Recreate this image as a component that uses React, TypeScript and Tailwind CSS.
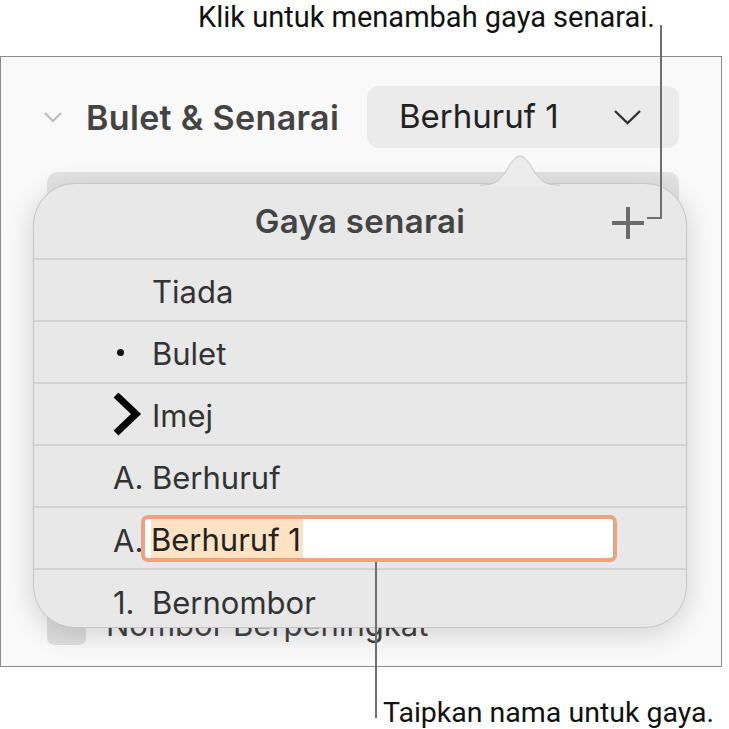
const rows = [
  { marker: "", label: "Tiada" },
  { marker: "dot", label: "Bulet" },
  { marker: "chev", label: "Imej" },
  { marker: "A.", label: "Berhuruf" },
  { marker: "A.", label: "Berhuruf 1", editing: true },
  { marker: "1.", label: "Bernombor" },
];

function Marker({ kind }: { kind: string }) {
  if (kind === "dot") {
    return <span className="ml-[4px] -mt-[4px] block h-[7px] w-[7px] rounded-full bg-[#111]" />;
  }
  if (kind === "chev") {
    return (
      <svg width="30" height="44" viewBox="0 0 30 44" className="-mt-[6px]">
        <polyline points="3,3 23,22 3,41" fill="none" stroke="#000" strokeWidth="7" strokeLinejoin="miter" />
      </svg>
    );
  }
  return <span className="text-[31px] text-[#333]">{kind}</span>;
}

function App() {
  return (
    <div className="relative h-[729px] w-[729px] overflow-hidden bg-white font-['Inter',sans-serif]">
      {/* top callout */}
      <div className="h-[56px] pr-[74px] text-right font-['Roboto',sans-serif] text-[29px] leading-[34px] text-[#111]">
        Klik untuk menambah gaya senarai.
      </div>

      {/* inspector panel */}
      <div className="h-[611px] w-[722px] border border-[#8c8c8c] bg-[#f9f9f9] px-[42px] pt-[29px]">
        <div className="flex items-center">
          <svg width="20" height="12" viewBox="0 0 20 12">
            <polyline points="2,2 10,10 18,2" fill="none" stroke="#bdbdbd" strokeWidth="2.2" />
          </svg>
          <span className="ml-[23px] text-[34px] font-semibold tracking-[0.01em] text-[#444]">Bulet &amp; Senarai</span>
          <div className="ml-auto flex h-[62px] w-[312px] items-center justify-between rounded-[12px] bg-[#ebebeb] pl-[32px] pr-[37px]">
            <span className="text-[33px] text-[#222]">Berhuruf 1</span>
            <svg width="29" height="16" viewBox="0 0 29 16">
              <polyline points="2,2 14.5,14 27,2" fill="none" stroke="#333" strokeWidth="2.4" />
            </svg>
          </div>
        </div>
        <div className="ml-[4px] mt-[24px] h-[46px] rounded-[10px] bg-[#e3e3e3]" />
        <div className="ml-[4px] mt-[384px] flex items-center">
          <div className="h-[40px] w-[39px] rounded-[7px] bg-[#dedede]" />
          <span className="ml-[20px] text-[31px] text-[#444]">Nombor Berpeningkat</span>
        </div>
      </div>

      {/* popover */}
      <div className="absolute left-[33px] top-[183px] h-[445px] w-[654px] rounded-[42px] border border-[#c6c6c6] bg-[#e8e8e8] shadow-[0_6px_28px_rgba(0,0,0,0.16)]">
        <svg
          width="80"
          height="31"
          viewBox="0 0 80 31"
          className="absolute left-[446px] top-[-29px]"
        >
          <path d="M0,30 C14,30 18,28 26,16 C33,4 37,1 40,1 C43,1 47,4 54,16 C62,28 66,30 80,30 L80,31 L0,31 Z" fill="#ececec" />
          <path d="M0,30 C14,30 18,28 26,16 C33,4 37,1 40,1 C43,1 47,4 54,16 C62,28 66,30 80,30" fill="none" stroke="#c6c6c6" strokeWidth="1" />
        </svg>
        <div className="relative flex h-[76px] items-center justify-center border-b-2 border-[#d3d3d3] pt-[2px]">
          <span className="text-[33px] font-semibold tracking-[0.01em] text-[#444]">Gaya senarai</span>
          <svg width="32" height="32" viewBox="0 0 32 32" className="absolute left-[578px] top-[23px]">
            <line x1="16" y1="1" x2="16" y2="31" stroke="#6b6b6b" strokeWidth="4" strokeLinecap="round" />
            <line x1="1" y1="16" x2="31" y2="16" stroke="#6b6b6b" strokeWidth="4" strokeLinecap="round" />
          </svg>
        </div>
        {rows.map((r, i) => (
          <div
            key={i}
            className={`flex h-[62px] items-center pl-[79px] ${i < rows.length - 1 ? "border-b-2 border-[#d3d3d3]" : ""} ${r.editing ? "" : "pt-[5px]"}`}
          >
            <div className={`flex w-[39px] items-center ${r.editing ? "pt-[6px]" : ""}`}>
              <Marker kind={r.marker} />
            </div>
            {r.editing ? (
              <div className="-ml-[11px] flex h-[47px] w-[476px] items-center rounded-[7px] border-[4px] border-[#eea27f] bg-white pl-[6px]">
                <span className="flex h-full items-center bg-[#fde2c3] pr-[2px] pt-[4px] text-[31px] text-[#222]">{r.label}</span>
              </div>
            ) : (
              <span className="text-[31px] text-[#333]">{r.label}</span>
            )}
          </div>
        ))}
      </div>

      {/* callout lines */}
      <div className="absolute left-[660px] top-[25px] h-[194px] w-[2px] bg-[#6f6f6f]" />
      <div className="absolute left-[647px] top-[217px] h-[2px] w-[14px] bg-[#6f6f6f]" />
      <div className="absolute left-[375px] top-[562px] h-[156px] w-[2px] bg-[#6f6f6f]" />
      <div className="absolute left-[383px] top-[696px] font-['Roboto',sans-serif] text-[28.5px] leading-[34px] text-[#111]">
        Taipkan nama untuk gaya.
      </div>
    </div>
  );
}

export default App;
